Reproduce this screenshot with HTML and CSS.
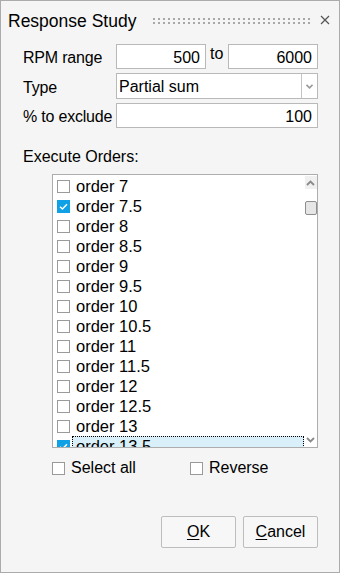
FILE: index.html
```html
<!DOCTYPE html>
<html>
<head>
<meta charset="utf-8">
<link rel="stylesheet" href="styles.css">
</head>
<body>
<div class="window">
  <div class="titlebar">
    <span class="title">Response Study</span>
    <svg class="grip" width="158" height="6" viewBox="0 0 158 6">
      <defs><pattern id="dots" width="5" height="4" patternUnits="userSpaceOnUse"><rect x="0" y="0" width="2" height="2" fill="#a8a8a8"/></pattern></defs>
      <rect width="158" height="6" fill="url(#dots)"/>
    </svg>
    <svg class="close" width="10" height="10" viewBox="0 0 10 10"><path d="M1 1 L9 9 M9 1 L1 9" stroke="#555" stroke-width="1.2" fill="none"/></svg>
  </div>

  <div class="form">
    <div class="label">RPM range</div>
    <div class="range">
      <div class="field num">500</div>
      <span class="to">to</span>
      <div class="field num">6000</div>
    </div>
    <div class="label">Type</div>
    <div class="select">
      <div class="select-text">Partial sum</div>
      <div class="select-btn"><svg width="7" height="5" viewBox="0 0 7 5"><path d="M0.5 0.8 L3.5 3.8 L6.5 0.8" stroke="#9a9a9a" stroke-width="1.6" fill="none"/></svg></div>
    </div>
    <div class="label">% to exclude</div>
    <div class="field num">100</div>
  </div>

  <div class="section-label">Execute Orders:</div>

  <div class="listbox">
    <div class="list">
      <div class="row"><span class="cb"></span><span class="txt">order 7</span></div>
      <div class="row"><span class="cb on"><svg width="13" height="13" viewBox="0 0 13 13"><path d="M3 6.8 L5.4 9 L10 4.2" stroke="#fff" stroke-width="1.5" fill="none"/></svg></span><span class="txt">order 7.5</span></div>
      <div class="row"><span class="cb"></span><span class="txt">order 8</span></div>
      <div class="row"><span class="cb"></span><span class="txt">order 8.5</span></div>
      <div class="row"><span class="cb"></span><span class="txt">order 9</span></div>
      <div class="row"><span class="cb"></span><span class="txt">order 9.5</span></div>
      <div class="row"><span class="cb"></span><span class="txt">order 10</span></div>
      <div class="row"><span class="cb"></span><span class="txt">order 10.5</span></div>
      <div class="row"><span class="cb"></span><span class="txt">order 11</span></div>
      <div class="row"><span class="cb"></span><span class="txt">order 11.5</span></div>
      <div class="row"><span class="cb"></span><span class="txt">order 12</span></div>
      <div class="row"><span class="cb"></span><span class="txt">order 12.5</span></div>
      <div class="row"><span class="cb"></span><span class="txt">order 13</span></div>
      <div class="row current"><span class="cb on"><svg width="13" height="13" viewBox="0 0 13 13"><path d="M3 6.8 L5.4 9 L10 4.2" stroke="#fff" stroke-width="1.5" fill="none"/></svg></span><span class="txt">order 13.5</span></div>
    </div>
    <div class="scrollbar">
      <div class="arrow up"><svg width="9" height="6" viewBox="0 0 9 6"><path d="M1 5 L4.5 1.5 L8 5" stroke="#8a8a8a" stroke-width="1.8" fill="none"/></svg></div>
      <div class="thumb"></div>
      <div class="track"></div>
      <div class="arrow down"><svg width="9" height="6" viewBox="0 0 9 6"><path d="M1 1 L4.5 4.5 L8 1" stroke="#8a8a8a" stroke-width="1.8" fill="none"/></svg></div>
    </div>
  </div>

  <div class="options">
    <label class="opt"><span class="cb"></span><span>Select all</span></label>
    <label class="opt rev"><span class="cb"></span><span>Reverse</span></label>
  </div>

  <div class="buttons">
    <div class="btn"><u>O</u>K</div>
    <div class="btn"><u>C</u>ancel</div>
  </div>
</div>
</body>
</html>
```
FILE: styles.css
```css
html, body {
  margin: 0;
  padding: 0;
  background: #f5f5f5;
}
.window {
  width: 340px;
  height: 573px;
  box-sizing: border-box;
  border: 1px solid #ababab;
  background: #f5f5f5;
  font-family: "Liberation Sans", Arial, sans-serif;
  font-size: 16px;
  color: #000;
  display: flex;
  flex-direction: column;
  overflow: hidden;
}
.titlebar {
  height: 39px;
  display: flex;
  align-items: center;
  padding: 0 9px 0 7px;
}
.title {
  font-size: 17.5px;
  padding-top: 2px;
}
.grip {
  margin-left: auto;
  margin-top: 1px;
}
.close {
  margin-left: 9px;
  margin-top: -1px;
}
.form {
  margin: 4px 21px 0 21px;
  display: grid;
  grid-template-columns: 94px 1fr;
  grid-template-rows: 25px 26px 25px;
  row-gap: 4px;
}
.label {
  display: flex;
  align-items: center;
  padding-left: 1px;
  padding-top: 3px;
  font-size: 16px;
  letter-spacing: -0.2px;
  white-space: nowrap;
}
.range {
  display: flex;
}
.field {
  background: #fff;
  border: 1px solid #b9b9b9;
  box-sizing: border-box;
  height: 25px;
  display: flex;
  align-items: center;
  padding: 2px 5px 0 5px;
}
.range .field {
  width: 90px;
}
.num {
  justify-content: flex-end;
}
.to {
  width: 22px;
  padding-left: 4px;
  box-sizing: border-box;
  line-height: 20px;
}
.select {
  display: flex;
  background: #fff;
  border: 1px solid #b9b9b9;
  height: 26px;
  box-sizing: border-box;
}
.select-text {
  flex: 1;
  display: flex;
  align-items: center;
  padding-left: 2px;
  padding-top: 2px;
}
.select-btn {
  width: 15px;
  border-left: 1px solid #c4c4c4;
  display: flex;
  align-items: center;
  justify-content: center;
}
.section-label {
  margin: 20px 0 0 22px;
  line-height: 18px;
}
.listbox {
  margin: 8px 21px 0 51px;
  height: 274px;
  box-sizing: border-box;
  border: 1px solid #adadad;
  background: #fff;
  display: flex;
}
.list {
  flex: 1;
  overflow: hidden;
  padding-top: 1px;
}
.row {
  height: 20px;
  display: flex;
  align-items: center;
  padding-left: 4px;
  font-size: 16.5px;
}
.cb {
  width: 13px;
  height: 13px;
  box-sizing: border-box;
  border: 1px solid #9a9a9a;
  background: #fff;
  display: inline-block;
  flex: none;
  position: relative;
}
.cb.on {
  background: #0fa0e6;
  border-color: #0fa0e6;
}
.cb.on svg {
  position: absolute;
  left: -1px;
  top: -1px;
}
.row .txt {
  margin-left: 2px;
  padding: 1px 3px 0 3px;
  line-height: 17px;
  border: 1px solid transparent;
  flex: 1;
}
.row.current .txt {
  background: #d9f0fb;
  border: 1px dotted #000;
}
.scrollbar {
  width: 13px;
  display: flex;
  flex-direction: column;
  align-items: center;
  padding-top: 1px;
}
.arrow {
  width: 12px;
  height: 13px;
  display: flex;
  align-items: center;
  justify-content: center;
}
.arrow.up {
  background: #f0f0f0;
}
.thumb {
  width: 12px;
  height: 14px;
  box-sizing: border-box;
  margin-top: 12px;
  border: 1px solid #8e8e8e;
  border-radius: 2px;
  background: #e6e6e6;
}
.track {
  flex: 1;
}
.arrow.down {
  height: 11px;
  margin-bottom: 2px;
}
.options {
  display: flex;
  margin: 10px 0 0 51px;
  height: 20px;
  align-items: center;
}
.opt {
  display: flex;
  align-items: center;
}
.opt .cb {
  margin-right: 6px;
}
.opt.rev {
  margin-left: 54px;
}
.buttons {
  display: flex;
  justify-content: flex-end;
  gap: 7px;
  margin: 38px 21px 0 0;
}
.btn {
  width: 75px;
  height: 32px;
  box-sizing: border-box;
  border: 1px solid #bdbdbd;
  border-radius: 2px;
  background: #f7f7f7;
  display: flex;
  align-items: center;
  justify-content: center;
}
.btn u {
  text-decoration-thickness: 1px;
  text-underline-offset: 2px;
}
```
